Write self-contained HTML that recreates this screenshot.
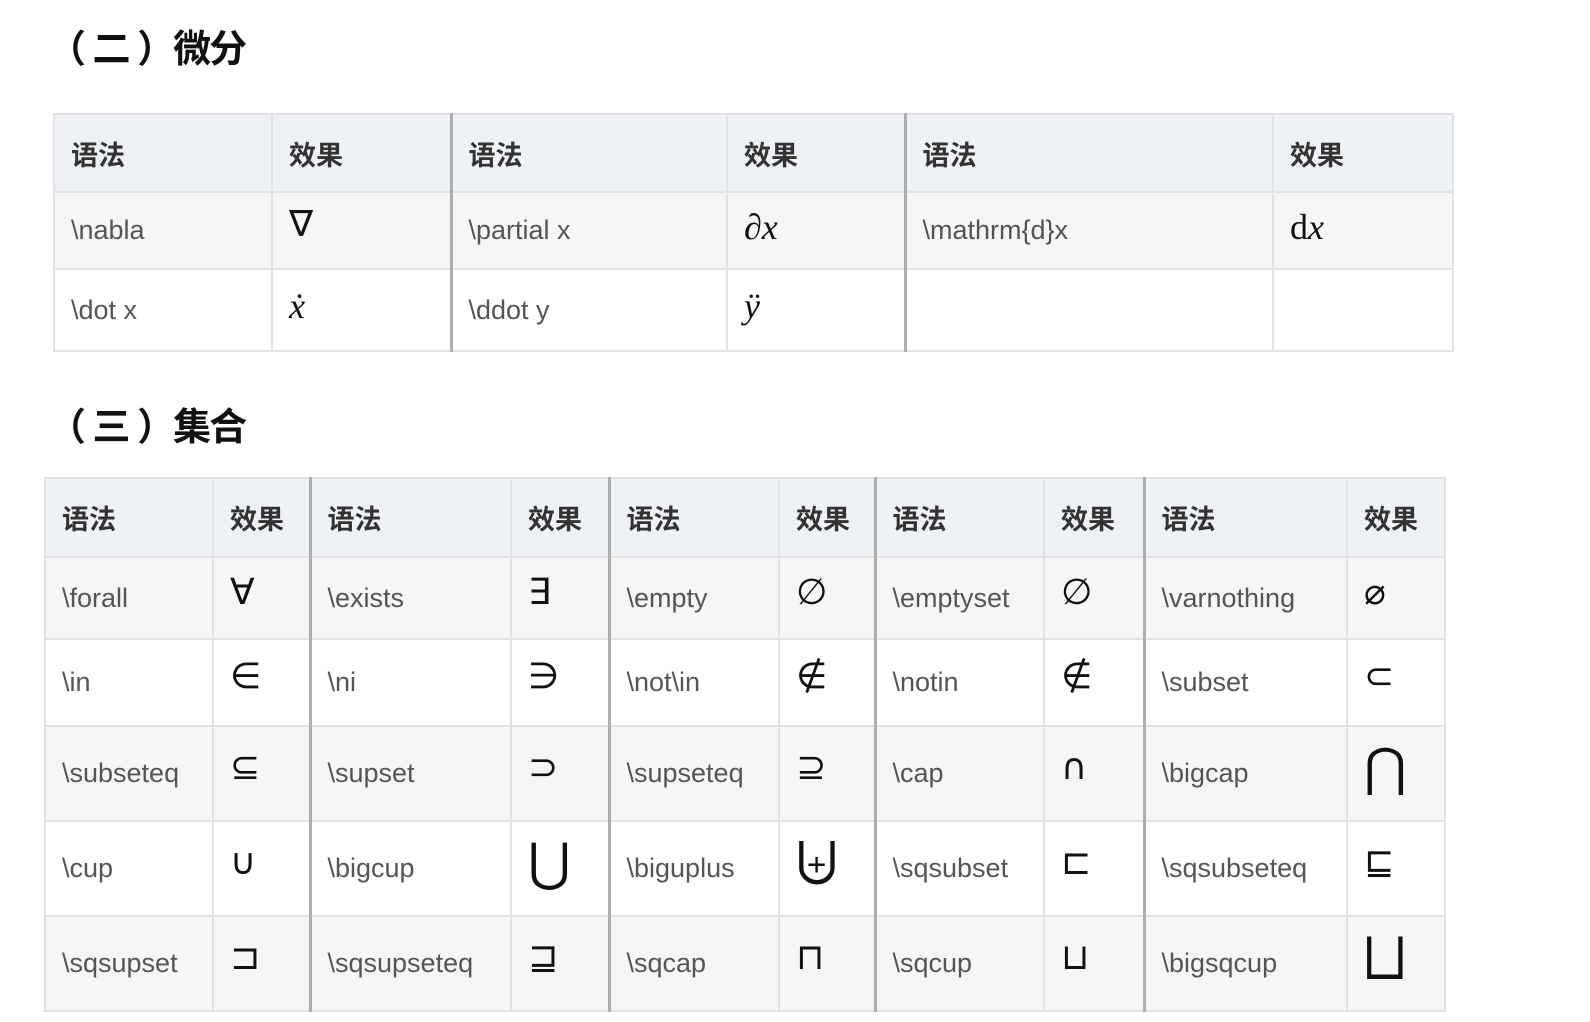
<!DOCTYPE html>
<html><head><meta charset="utf-8">
<style>
body{margin:0;width:1590px;height:1022px;background:#fff;overflow:hidden;font-family:"Liberation Sans","Noto Sans CJK SC",sans-serif;}
h2{position:absolute;margin:0;font-size:38px;font-weight:bold;color:#111;font-family:"Liberation Sans","Noto Sans CJK SC",sans-serif;letter-spacing:-2px}
table{position:absolute;border-collapse:collapse;table-layout:fixed;}
td,th{border:2px solid #e2e2e2;padding:0 0 0 16px;font-size:27px;color:#555;text-align:left;vertical-align:middle;white-space:nowrap;overflow:hidden}
th{background:#eef1f5;color:#333;font-weight:bold;font-family:"Liberation Sans","Noto Sans CJK SC",sans-serif;font-size:27px}
tr.o td{background:#f6f6f6}
tr.e td{background:#fff}
.g{border-left:3px solid #aeaeae}
.m{font-family:"DejaVu Sans",sans-serif;color:#111;font-size:36px;position:relative;top:-6px}
.mi{font-family:"Liberation Serif",serif;font-style:italic;color:#111;font-size:36px;position:relative;top:-4px}
.big{font-family:"DejaVu Sans",sans-serif;color:#111;font-size:52px;position:relative;top:-6px}
</style></head><body>
<h2 style="left:48px;top:18px">（ 二 ）微分</h2>
<table style="left:53px;top:113px;width:1399px">
<colgroup><col style="width:218px"><col style="width:179px"><col style="width:276px"><col style="width:178px"><col style="width:368px"><col style="width:180px"></colgroup>
<tr style="height:78px"><th>语法</th><th>效果</th><th class="g">语法</th><th>效果</th><th class="g">语法</th><th>效果</th></tr>
<tr class="o" style="height:77px"><td>\nabla</td><td><span class="m" style="font-size:36px">∇</span></td><td class="g">\partial x</td><td><span class="mi">∂x</span></td><td class="g">\mathrm{d}x</td><td><span class="mi"><span style="font-style:normal">d</span>x</span></td></tr>
<tr class="e" style="height:82px"><td>\dot x</td><td><span class="mi">ẋ</span></td><td class="g">\ddot y</td><td><span class="mi">ÿ</span></td><td class="g"></td><td></td></tr>
</table>
<h2 style="left:48px;top:396px">（ 三 ）集合</h2>
<table style="left:44px;top:477px;width:1400px">
<colgroup><col style="width:168px"><col style="width:97px"><col style="width:201px"><col style="width:98px"><col style="width:170px"><col style="width:96px"><col style="width:169px"><col style="width:100px"><col style="width:203px"><col style="width:98px"></colgroup>
<tr style="height:79px"><th>语法</th><th>效果</th><th class="g">语法</th><th>效果</th><th class="g">语法</th><th>效果</th><th class="g">语法</th><th>效果</th><th class="g">语法</th><th>效果</th></tr>
<tr class="o" style="height:82px"><td>\forall</td><td><span class="m">∀</span></td><td class="g">\exists</td><td><span class="m">∃</span></td><td class="g">\empty</td><td><span class="m">∅</span></td><td class="g">\emptyset</td><td><span class="m">∅</span></td><td class="g">\varnothing</td><td><span class="m">⌀</span></td></tr>
<tr class="e" style="height:87px"><td>\in</td><td><span class="m">∈</span></td><td class="g">\ni</td><td><span class="m">∋</span></td><td class="g">\not\in</td><td><span class="m">∉</span></td><td class="g">\notin</td><td><span class="m">∉</span></td><td class="g">\subset</td><td><span class="m">⊂</span></td></tr>
<tr class="o" style="height:95px"><td>\subseteq</td><td><span class="m">⊆</span></td><td class="g">\supset</td><td><span class="m">⊃</span></td><td class="g">\supseteq</td><td><span class="m">⊇</span></td><td class="g">\cap</td><td><span class="m">∩</span></td><td class="g">\bigcap</td><td><span class="big">⋂</span></td></tr>
<tr class="e" style="height:95px"><td>\cup</td><td><span class="m">∪</span></td><td class="g">\bigcup</td><td><span class="big">⋃</span></td><td class="g">\biguplus</td><td><span class="big">⨄</span></td><td class="g">\sqsubset</td><td><span class="m">⊏</span></td><td class="g">\sqsubseteq</td><td><span class="m">⊑</span></td></tr>
<tr class="o" style="height:95px"><td>\sqsupset</td><td><span class="m">⊐</span></td><td class="g">\sqsupseteq</td><td><span class="m">⊒</span></td><td class="g">\sqcap</td><td><span class="m">⊓</span></td><td class="g">\sqcup</td><td><span class="m">⊔</span></td><td class="g">\bigsqcup</td><td><span class="big">⨆</span></td></tr>
</table>
</body></html>
